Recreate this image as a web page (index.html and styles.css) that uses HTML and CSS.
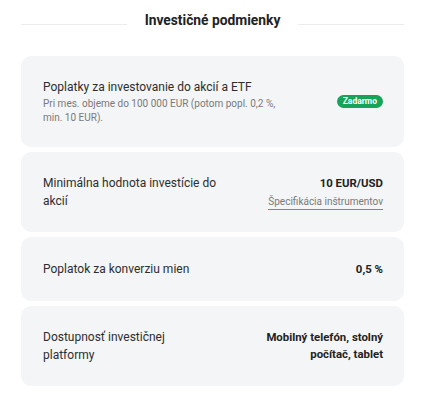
FILE: index.html
```html
<!DOCTYPE html>
<html lang="sk">
<head>
<meta charset="utf-8">
<link rel="stylesheet" href="styles.css">
</head>
<body>
<div class="page">
  <div class="heading">
    <span class="line"></span>
    <h2 class="title">Investičné podmienky</h2>
    <span class="line"></span>
  </div>
  <div class="cards">
    <div class="card">
      <div class="left wide">
        <div class="label">Poplatky za investovanie do akcií a ETF</div>
        <div class="note">Pri mes. objeme do 100 000 EUR (potom popl. 0,2 %, min. 10 EUR).</div>
      </div>
      <div class="right"><span class="badge">Zadarmo</span></div>
    </div>
    <div class="card">
      <div class="left medium"><div class="label">Minimálna hodnota investície do akcií</div></div>
      <div class="right">
        <div class="value">10 EUR/USD</div>
        <a class="link" href="#">Špecifikácia inštrumentov</a>
      </div>
    </div>
    <div class="card card-single">
      <div class="left"><div class="label">Poplatok za konverziu mien</div></div>
      <div class="right"><div class="value">0,5 %</div></div>
    </div>
    <div class="card">
      <div class="left"><div class="label">Dostupnosť investičnej platformy</div></div>
      <div class="right narrow"><div class="value">Mobilný telefón, stolný počítač, tablet</div></div>
    </div>
  </div>
</div>
</body>
</html>
```
FILE: styles.css
```css
html, body { margin: 0; padding: 0; background: #fff; }
body { font-family: Roboto, "Noto Sans", sans-serif; color: #2b2b2b; }
.page { padding: 10px 21px 0 21px; }
.heading { display: flex; align-items: center; gap: 18px; height: 20px; margin-bottom: 26px; }
.line { flex: 1; height: 1px; background: #ececec; margin-top: 8px; }
.title { margin: 0; font-size: 13.8px; font-weight: 700; color: #222; line-height: 20px; }
.cards { display: flex; flex-direction: column; gap: 5px; }
.card { background: #f3f5f6; border-radius: 10px; padding: 22px 21px 22px 22px; display: flex; justify-content: space-between; align-items: center; }
.card-single { padding-top: 23px; padding-bottom: 23px; }
.left { max-width: 160px; }
.left.medium { max-width: 182px; }
.left.wide { max-width: 245px; }
.label { font-size: 12px; line-height: 18px; color: #2e2e2e; }
.note { font-size: 10px; line-height: 14px; color: #7a7a7a; margin-top: 1px; }
.right { text-align: right; display: flex; flex-direction: column; align-items: flex-end; }
.right.narrow { max-width: 140px; }
.value { font-size: 11.4px; font-weight: 700; line-height: 17px; color: #222; }
.link { font-size: 10px; line-height: 14px; color: #7a7a7a; text-decoration: none; border-bottom: 1px solid #34b27a; margin-top: 3px; }
.badge { background: #17a35a; color: #fff; font-size: 8.5px; font-weight: 700; line-height: 11px; padding: 1px 6px; border-radius: 7px; }
```
